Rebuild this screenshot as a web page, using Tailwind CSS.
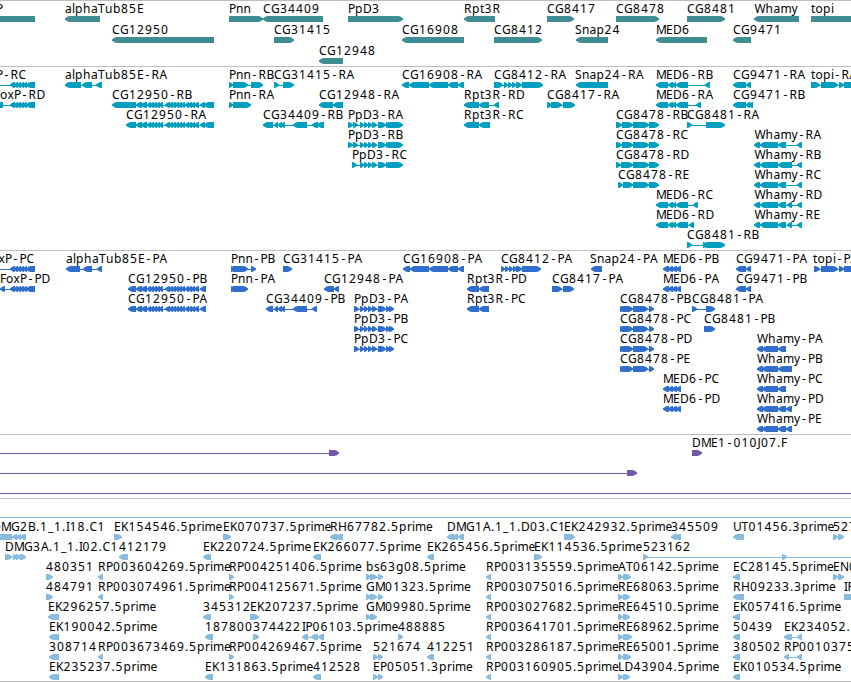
<!DOCTYPE html>
<html lang="en">
<head>
    <meta charset="UTF-8">
    <meta name="viewport" content="width=device-width, initial-scale=1.0">
    <title>Genome Browser</title>
    <script src="https://cdn.jsdelivr.net/npm/@tailwindcss/browser@4"></script>
</head>
<body class="bg-white overflow-hidden">
    <main class="w-[851px] h-[682px] flex flex-col overflow-hidden font-['Noto_Sans','Open_Sans',sans-serif] text-[12px] text-black">
        <!-- Genes -->
        <section class="h-[66px] shrink-0 border-t border-[#bebebe]">
            <svg id="genes" class="block w-full h-full overflow-hidden text-[#3f8d93]"></svg>
        </section>
        <!-- Transcripts -->
        <section class="h-[184px] shrink-0 border-t border-[#bebebe]">
            <svg id="transcripts" class="block w-full h-full overflow-hidden text-[#009fbf]"></svg>
        </section>
        <!-- Proteins -->
        <section class="h-[184px] shrink-0 border-t border-[#bebebe]">
            <svg id="proteins" class="block w-full h-full overflow-hidden text-[#2f6ecd]"></svg>
        </section>
        <!-- Clones -->
        <section class="h-[64px] shrink-0 border-t border-[#bebebe]">
            <svg id="clones" class="block w-full h-full overflow-hidden text-[#7357a9]"></svg>
        </section>
        <!-- ESTs -->
        <section class="h-[184px] shrink-0 border-y border-[#bebebe]">
            <svg id="ests" class="block w-full h-full overflow-hidden text-[#88bbdd]"></svg>
        </section>
    </main>

    <script>
        // Feature: [row, label x, label, strand, 'start-end start-end ...']
        const genes = [
            [0, -24, 'FoxP', '<', '-30-35'],
            [0, 65, 'alphaTub85E', '<', '65-100'],
            [0, 229, 'Pnn', '>', '229-263'],
            [0, 263, 'CG34409', '<', '263-323'],
            [0, 348, 'PpD3', '>', '348-403'],
            [0, 464, 'Rpt3R', '<', '464-495'],
            [0, 547, 'CG8417', '>', '547-574'],
            [0, 616, 'CG8478', '>', '616-659'],
            [0, 687, 'CG8481', '>', '687-725'],
            [0, 754.5, 'Whamy', '<', '754-799'],
            [0, 811, 'topi', '>', '811-880'],
            [1, 112, 'CG12950', '<', '112-214'],
            [1, 274, 'CG31415', '>', '274-294'],
            [1, 402, 'CG16908', '<', '402-464'],
            [1, 494, 'CG8412', '>', '494-542'],
            [1, 575, 'Snap24', '<', '576-608'],
            [1, 656, 'MED6', '<', '656-707'],
            [1, 733, 'CG9471', '<', '733-751'],
            [2, 319, 'CG12948', '<', '319-343'],
        ];

        // Exon runs shared by several isoforms
        const foxp = '10-15 14-18 17-21 20-24 23-27 26-35';
        const cg12950 = '136-142 141-147 147-151 150-154 153-157 156-160 159-163 165-170 169-173 172-176 175-179 178-182 181-185 185-189 188-192 191-195 194-199';
        const ppd3 = '360-364 364-368 368-372 372-377 378-386';
        const med6 = '656-668 668-673 672-676 676-688';
        const whamy = '754-760 760-778 778-786';

        const transcripts = [
            [0, -24, 'FoxP-RC', '<', '-30--20 ' + foxp],
            [0, 65, 'alphaTub85E-RA', '<', '65-81 82-92 96-102'],
            [0, 229, 'Pnn-RB', '>', '229-233 233-248 251-263'],
            [0, 274, 'CG31415-RA', '>', '274-279 283-294'],
            [0, 402, 'CG16908-RA', '<', '402-409 409-429 429-448 448-458 458-464'],
            [0, 494, 'CG8412-RA', '>', '494-503 504-508 508-512 512-516 516-522 522-543'],
            [0, 575, 'Snap24-RA', '<', '576-608'],
            [0, 656, 'MED6-RB', '<', med6 + ' 705-710'],
            [0, 733, 'CG9471-RA', '<', '733-746 746-751'],
            [0, 811, 'topi-RA', '>', '811-820 821-838 839-844 844-870'],
            [1, -6, 'FoxP-RD', '<', '-10-3 ' + foxp],
            [1, 112, 'CG12950-RB', '<', '112-136 ' + cg12950 + ' 200-205 204-214'],
            [1, 229, 'Pnn-RA', '>', '229-233 233-251'],
            [1, 319, 'CG12948-RA', '<', '319-333 333-343'],
            [1, 464, 'Rpt3R-RD', '<', '464-479 479-489 494-499'],
            [1, 547, 'CG8417-RA', '>', '547-552 551-562 563-575'],
            [1, 656, 'MED6-RA', '<', med6 + ' 696-701'],
            [1, 733, 'CG9471-RB', '<', '733-746 746-750 748-753'],
            [2, 126, 'CG12950-RA', '<', '126-136 ' + cg12950 + ' 200-205 204-214'],
            [2, 263, 'CG34409-RB', '<', '263-273 274-278 278-282 281-285 293-307 312-318 317-324'],
            [2, 348, 'PpD3-RA', '>', '348-353 353-358 ' + ppd3 + ' 386-390 388-403'],
            [2, 464, 'Rpt3R-RC', '<', '464-479 479-490'],
            [2, 616, 'CG8478-RB', '>', '616-622 622-633 633-649 649-659'],
            [2, 687, 'CG8481-RA', '>', '687-692 706-725'],
            [3, 348, 'PpD3-RB', '>', '348-353 353-358 ' + ppd3 + ' 386-390 388-403'],
            [3, 616, 'CG8478-RC', '>', '616-622 622-633 633-649 649-659'],
            [3, 754.5, 'Whamy-RA', '<', whamy + ' 797-802'],
            [4, 352, 'PpD3-RC', '>', '352-357 ' + ppd3 + ' 386-390 388-403'],
            [4, 616, 'CG8478-RD', '>', '616-621 621-633 633-649 649-659'],
            [4, 754.5, 'Whamy-RB', '<', '754-760 760-778 778-792 797-802'],
            [5, 618, 'CG8478-RE', '>', '618-623 623-633 633-649 649-659'],
            [5, 754.5, 'Whamy-RC', '<', whamy + ' 797-802'],
            [6, 656, 'MED6-RC', '<', med6 + ' 693-698'],
            [6, 754.5, 'Whamy-RD', '<', whamy + ' 787-792 797-802'],
            [7, 656, 'MED6-RD', '<', med6 + ' 689-694'],
            [7, 754.5, 'Whamy-RE', '<', whamy + ' 787-792 797-802'],
            [8, 687, 'CG8481-RB', '>', '687-692 703-708 706-725'],
        ];

        const medP = '663-669 668-673 672-677 676-681';
        const proteins = [
            [0, -15, 'FoxP-PC', '<', '-30--20 ' + foxp],
            [0, 66, 'alphaTub85E-PA', '<', '66-80 83-92 97-102'],
            [0, 231, 'Pnn-PB', '>', '231-235 233-248 251-256'],
            [0, 283, 'CG31415-PA', '>', '283-292'],
            [0, 403, 'CG16908-PA', '<', '403-410 410-429 429-448 448-458 458-464'],
            [0, 501, 'CG8412-PA', '>', '501-505 505-509 509-513 513-517 516-522 522-541'],
            [0, 590, 'Snap24-PA', '<', '591-602'],
            [0, 663, 'MED6-PB', '<', medP],
            [0, 736, 'CG9471-PA', '<', '736-746 746-751'],
            [0, 813, 'topi-PA', '>', '814-820 821-838 839-844 844-870'],
            [1, 0, 'FoxP-PD', '<', '0-5 ' + foxp],
            [1, 128, 'CG12950-PB', '<', '128-136 ' + cg12950 + ' 200-206'],
            [1, 231, 'Pnn-PA', '>', '231-235 233-248'],
            [1, 324, 'CG12948-PA', '<', '324-334 334-339'],
            [1, 467, 'Rpt3R-PD', '<', '467-479 479-489'],
            [1, 552, 'CG8417-PA', '>', '552-562 563-574'],
            [1, 663, 'MED6-PA', '<', medP],
            [1, 736, 'CG9471-PB', '<', '736-746 746-751'],
            [2, 128, 'CG12950-PA', '<', '128-136 ' + cg12950 + ' 200-206'],
            [2, 266, 'CG34409-PB', '<', '266-273 274-278 278-282 281-285 293-307 312-317'],
            [2, 354, 'PpD3-PA', '>', '354-359 ' + ppd3 + ' 386-390 389-394'],
            [2, 467, 'Rpt3R-PC', '<', '467-479 479-489'],
            [2, 620, 'CG8478-PB', '>', '620-624 622-633 633-648 649-654'],
            [2, 692, 'CG8481-PA', '>', '692-697 706-715'],
            [3, 354, 'PpD3-PB', '>', '354-359 ' + ppd3 + ' 386-390 389-394'],
            [3, 620, 'CG8478-PC', '>', '620-624 622-633 633-648 649-654'],
            [3, 704, 'CG8481-PB', '>', '704-715'],
            [4, 354, 'PpD3-PC', '>', '354-359 ' + ppd3 + ' 386-390 389-394'],
            [4, 620, 'CG8478-PD', '>', '620-624 622-633 633-648 649-654'],
            [4, 757, 'Whamy-PA', '<', '757-763 762-778 778-786'],
            [5, 620, 'CG8478-PE', '>', '620-624 622-633 633-648 649-654'],
            [5, 757, 'Whamy-PB', '<', '757-763 762-778 778-792'],
            [6, 663, 'MED6-PC', '<', medP],
            [6, 757, 'Whamy-PC', '<', '757-763 762-778 778-786'],
            [7, 663, 'MED6-PD', '<', medP],
            [7, 757, 'Whamy-PD', '<', '757-763 762-778 778-786 786-792'],
            [8, 757, 'Whamy-PE', '<', '757-763 762-778 778-786 786-792'],
        ];

        const clones = [
            [0, 0, '', '>', '-20--10 329-339'],
            [0, 692, 'DME1-010J07.F', '>', '692-702'],
            [1, 0, '', '>', '-20--10 627-637'],
            [2, 0, '', '>', '-20--10 860-870'],
        ];

        const ests = [
            [0, -8, 'DMG2B.1_1.I18.C1', '<', '-10-12 12-17 16-21 20-26'],
            [0, 114, 'EK154546.5prime', '>', '114-122'],
            [0, 223, 'EK070737.5prime', '>', '223-231'],
            [0, 330, 'RH67782.5prime', '<', '330-337 335-343'],
            [0, 447, 'DMG1A.1_1.D03.C1', '<', '447-454 452-458 458-464'],
            [0, 564, 'EK242932.5prime', '>', '564-575'],
            [0, 671, '345509', '<', '671-677 675-681'],
            [0, 733, 'UT01456.3prime', '<', '733-744'],
            [0, 833, '527154', '>', '833-838 838-844'],
            [1, 5, 'DMG3A.1_1.I02.C1', '>', '5-12 13-17 16-21 20-26'],
            [1, 119, '412179', '<', '119-128'],
            [1, 203, 'EK220724.5prime', '<', '203-211'],
            [1, 313, 'EK266077.5prime', '<', '313-321'],
            [1, 427, 'EK265456.5prime', '<', '427-434'],
            [1, 534, 'EK114536.5prime', '>', '534-542'],
            [1, 643, '523162', '>', '643-648 782-787 860-870'],
            [2, 46, '480351', '>', '46-53'],
            [2, 98, 'RP003604269.5prime', '<', '98-103'],
            [2, 229, 'RP004251406.5prime', '>', '229-234'],
            [2, 366, 'bs63g08.5prime', '>', '366-371 370-377 378-383'],
            [2, 486, 'RP003135559.5prime', '<', '486-491'],
            [2, 618, 'AT06142.5prime', '>', '618-623 623-631'],
            [2, 733, 'EC28145.5prime', '<', '733-740'],
            [2, 833, 'EN0451', '>', '833-838 838-844'],
            [3, 46, '484791', '>', '46-53'],
            [3, 98, 'RP003074961.5prime', '<', '98-103'],
            [3, 229, 'RP004125671.5prime', '>', '229-234'],
            [3, 366, 'GM01323.5prime', '>', '366-371 370-377 378-383'],
            [3, 486, 'RP003075016.5prime', '<', '486-491'],
            [3, 618, 'RE68063.5prime', '>', '618-623 623-630'],
            [3, 733, 'RH09233.3prime', '<', '733-744'],
            [3, 844, 'IP', '>', '844-870'],
            [4, 48, 'EK296257.5prime', '<', '48-59'],
            [4, 203, '345312', '<', '203-211'],
            [4, 250, 'EK207237.5prime', '>', '250-259'],
            [4, 366, 'GM09980.5prime', '>', '366-371 370-377'],
            [4, 486, 'RP003027682.5prime', '<', '486-491'],
            [4, 618, 'RE64510.5prime', '>', '618-623 623-630'],
            [4, 733, 'EK057416.5prime', '<', '733-740'],
            [5, 49, 'EK190042.5prime', '<', '49-59'],
            [5, 205, '187800', '<', '205-213'],
            [5, 253, '374422', '>', '253-259'],
            [5, 302, 'IP06103.5prime', '<', '302-308 311-318 318-324'],
            [5, 398, '488885', '>', '398-403'],
            [5, 486, 'RP003641701.5prime', '<', '486-491'],
            [5, 618, 'RE68962.5prime', '>', '618-623 623-632'],
            [5, 733, '50439', '<', '733-740'],
            [5, 784, 'EK234052.5prime', '<', '784-792 797-802'],
            [6, 49, '308714', '<', '49-59'],
            [6, 98, 'RP003673469.5prime', '<', '98-103'],
            [6, 229, 'RP004269467.5prime', '>', '229-234'],
            [6, 373, '521674', '>', '373-378 378-383'],
            [6, 427, '412251', '<', '427-434'],
            [6, 486, 'RP003286187.5prime', '<', '486-491'],
            [6, 618, 'RE65001.5prime', '>', '618-623 623-631'],
            [6, 733, '380502', '<', '733-740'],
            [6, 784, 'RP001037518', '<', '784-789 797-802'],
            [7, 49, 'EK235237.5prime', '<', '49-59'],
            [7, 205, 'EK131863.5prime', '<', '205-213'],
            [7, 313, '412528', '<', '313-321'],
            [7, 373, 'EP05051.3prime', '>', '373-378 378-383'],
            [7, 486, 'RP003160905.5prime', '<', '486-491'],
            [7, 618, 'LD43904.5prime', '>', '618-623 623-630'],
            [7, 733, 'EK010534.5prime', '<', '733-740'],
        ];

        const advance = {
            A: 8, C: 8, D: 9, E: 7, F: 6, G: 9, H: 9, I: 3.5, J: 3.5, K: 7.5, L: 6.5, M: 10, N: 9, P: 7, R: 8, S: 7, T: 7, U: 8.5, W: 11,
            a: 7, b: 8, e: 7.5, g: 8, h: 8, i: 3, l: 3, m: 11, n: 7.5, o: 7.5, p: 8, r: 5, s: 6, t: 4.5, u: 8, x: 6.5, y: 6.5,
            '-': 7.5, '.': 4, _: 6,
        };

        function label(x, y, text) {
            const xs = [];
            for (const ch of text) {
                // the hyphen is narrow, centre it in its cell
                xs.push(Math.round((ch === '-' ? x + 1.5 : x) * 10) / 10);
                x += advance[ch] || 8;
            }
            return `<text x="${xs.join(' ')}" y="${y}" class="fill-black">${text}</text>`;
        }

        function exon(a, b, strand, mid) {
            const head = Math.min(5, b - a);
            const left = strand === '<';
            const tip = left ? a : b;
            const dir = left ? 1 : -1;
            const knee = tip + dir * head * 0.45;
            const neck = tip + dir * head * 0.9;
            const tail = left ? b : a;
            return `<polygon points="${tip},${mid - 0.6} ${knee},${mid - 2.2} ${neck},${mid - 3} ${tail},${mid - 3} ${tail},${mid + 3} ${neck},${mid + 3} ${knee},${mid + 2.2} ${tip},${mid + 0.6}"/>`;
        }

        function drawTrack(id, features, pitch, top) {
            let shapes = '';
            let labels = '';
            for (const [row, x, name, strand, blocks] of features) {
                const y = top + row * pitch;
                const exons = blocks.split(' ').map(b => b.match(/^(-?\d+)-(-?\d+)$/).slice(1).map(Number));
                const start = exons[0][0];
                const end = exons[exons.length - 1][1];
                shapes += `<rect x="${start}" y="${y + 18}" width="${end - start}" height="1" shape-rendering="crispEdges"/>`;
                shapes += exons.map(([a, b]) => exon(a, b, strand, y + 18)).join('');
                if (name) labels += label(x, y + 12, name);
            }
            document.getElementById(id).innerHTML += `<g fill="currentColor">${shapes}</g>${labels}`;
        }

        document.getElementById('ests').innerHTML = '<rect x="0" y="18" width="851" height="1" fill="currentColor"/>';
        drawTrack('genes', genes, 21, 0);
        drawTrack('transcripts', transcripts, 20, 0);
        drawTrack('proteins', proteins, 20, 0);
        drawTrack('clones', clones, 20, 0);
        drawTrack('ests', ests, 20, 20);
    </script>
</body>
</html>
